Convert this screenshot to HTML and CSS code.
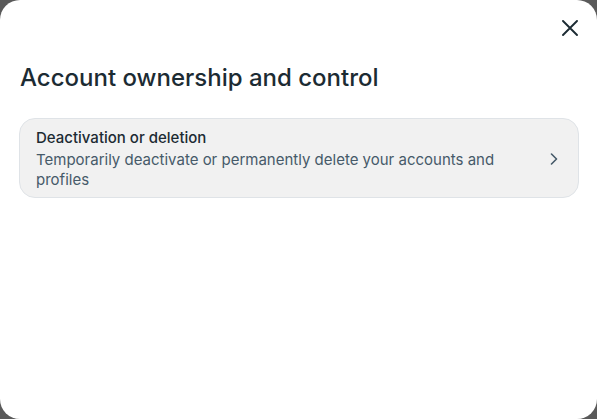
FILE: index.html
```html
<!DOCTYPE html>
<html lang="en">
<head>
<meta charset="utf-8">
<title>Account ownership and control</title>
<link rel="stylesheet" href="styles.css">
</head>
<body>
<div class="modal">
  <div class="topbar">
    <button class="close" aria-label="Close">
      <svg width="16" height="16" viewBox="0 0 16 16"><path d="M1 1 L15 15 M15 1 L1 15" stroke="#1c2b33" stroke-width="1.9" stroke-linecap="round" fill="none"/></svg>
    </button>
  </div>
  <h1 class="title">Account ownership and control</h1>
  <a class="card" href="#">
    <div class="card-text">
      <div class="card-title">Deactivation or deletion</div>
      <div class="card-sub">Temporarily deactivate or permanently delete your accounts and profiles</div>
    </div>
    <svg class="chev" width="8" height="12" viewBox="0 0 8 12"><path d="M1.5 1 L6.5 6 L1.5 11" stroke="#465a69" stroke-width="1.6" stroke-linecap="round" stroke-linejoin="round" fill="none"/></svg>
  </a>
</div>
</body>
</html>
```
FILE: styles.css
```css
html, body {
  margin: 0;
  height: 100%;
  background: #5a5a5a;
  font-family: Inter, "Noto Sans", sans-serif;
}
.modal {
  box-sizing: border-box;
  height: 100%;
  background: #fff;
  border-radius: 20px;
  padding: 0 18px 0 19px;
  display: flex;
  flex-direction: column;
}
.topbar {
  height: 56px;
  display: flex;
  justify-content: flex-end;
  align-items: center;
}
.close {
  background: none;
  border: 0;
  padding: 0;
  width: 24px;
  height: 24px;
  display: flex;
  align-items: center;
  justify-content: center;
  margin-right: -3px;
}
.title {
  margin: 6px 0 0 1px;
  font-size: 24px;
  line-height: 32px;
  font-weight: 500;
  color: #1c2b33;
  letter-spacing: 0;
}
.card {
  margin-top: 24px;
  display: flex;
  align-items: center;
  gap: 16px;
  padding: 9px 20px 7px 16px;
  background: #f1f1f1;
  border: 1px solid #dfe3e7;
  border-radius: 16px;
  text-decoration: none;
}
.card-text {
  flex: 1;
}
.card-title {
  font-size: 15px;
  line-height: 20px;
  font-weight: 500;
  color: #1c2b33;
}
.card-sub {
  margin-top: 2px;
  font-size: 15px;
  line-height: 20px;
  color: #465a69;
  padding-right: 22px;
}
.chev {
  flex: none;
}
```
